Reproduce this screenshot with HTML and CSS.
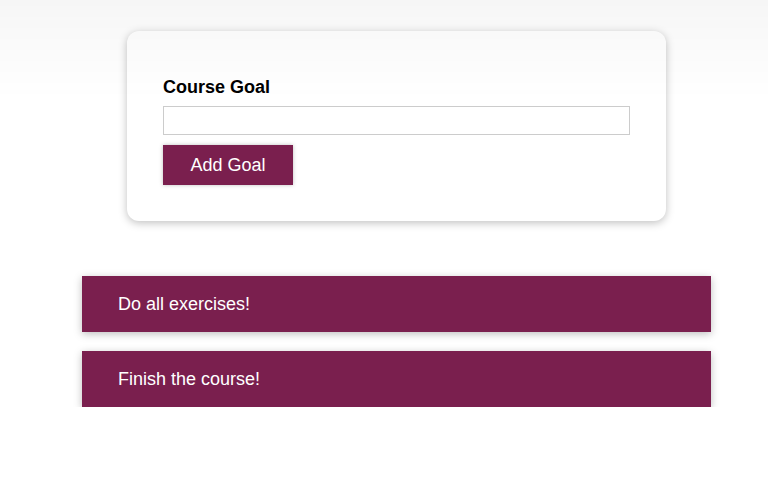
FILE: index.html
```html
<!DOCTYPE html>
<html>
<head>
<meta charset="utf-8">
<link rel="stylesheet" href="styles.css">
</head>
<body>
<div class="shade"></div>
<main class="page">
  <section class="card">
    <form class="goal-form">
      <div class="form-control">
        <label class="label">Course Goal</label>
        <input class="input" type="text">
      </div>
      <button class="button" type="button">Add Goal</button>
    </form>
  </section>
  <ul class="goals">
    <li class="goal">Do all exercises!</li>
    <li class="goal">Finish the course!</li>
  </ul>
</main>
</body>
</html>
```
FILE: styles.css
```css
* { box-sizing: border-box; }
html, body { margin: 0; padding: 0; background: #fff; }
body { font-family: "Liberation Sans", Arial, sans-serif; }
.shade {
  position: fixed; left: 0; top: 0; right: 0; height: 100px;
  background: linear-gradient(to bottom, rgba(0,0,0,0.035), rgba(0,0,0,0));
  pointer-events: none; z-index: 5;
}
.page { width: 629px; margin: 31px 0 0 82px; }
.card {
  margin: 0 45px;
  height: 190px;
  padding: 36px;
  background: #fff;
  border-radius: 12px;
  box-shadow: 0 2px 8px rgba(0,0,0,0.25);
}
.goal-form { margin: 0; }
.form-control { margin-top: 8px; display: flex; flex-direction: column; }
.label { font-weight: bold; font-size: 18px; line-height: 24px; color: #000; margin-bottom: 7px; }
.input {
  height: 29px; width: 467px; margin: 0;
  border: 1px solid #ccc; font: inherit; font-size: 16px; padding: 0 6px;
}
.button {
  margin-top: 10px; width: 130px; height: 40px;
  background: #7a1f4e; color: #fff; border: 1px solid #7a1f4e;
  font-family: "Liberation Sans", Arial, sans-serif; font-size: 18px;
  box-shadow: 0 0 4px rgba(0,0,0,0.26); cursor: pointer; padding: 0;
}
.goals { list-style: none; margin: 55px 0 0; padding: 0; display: flex; flex-direction: column; gap: 19px; }
.goal {
  height: 56px; padding: 0 36px; display: flex; align-items: center;
  background: #7a1f4e; color: #fff; font-size: 18px;
  box-shadow: 0 2px 8px rgba(0,0,0,0.26);
}
```
